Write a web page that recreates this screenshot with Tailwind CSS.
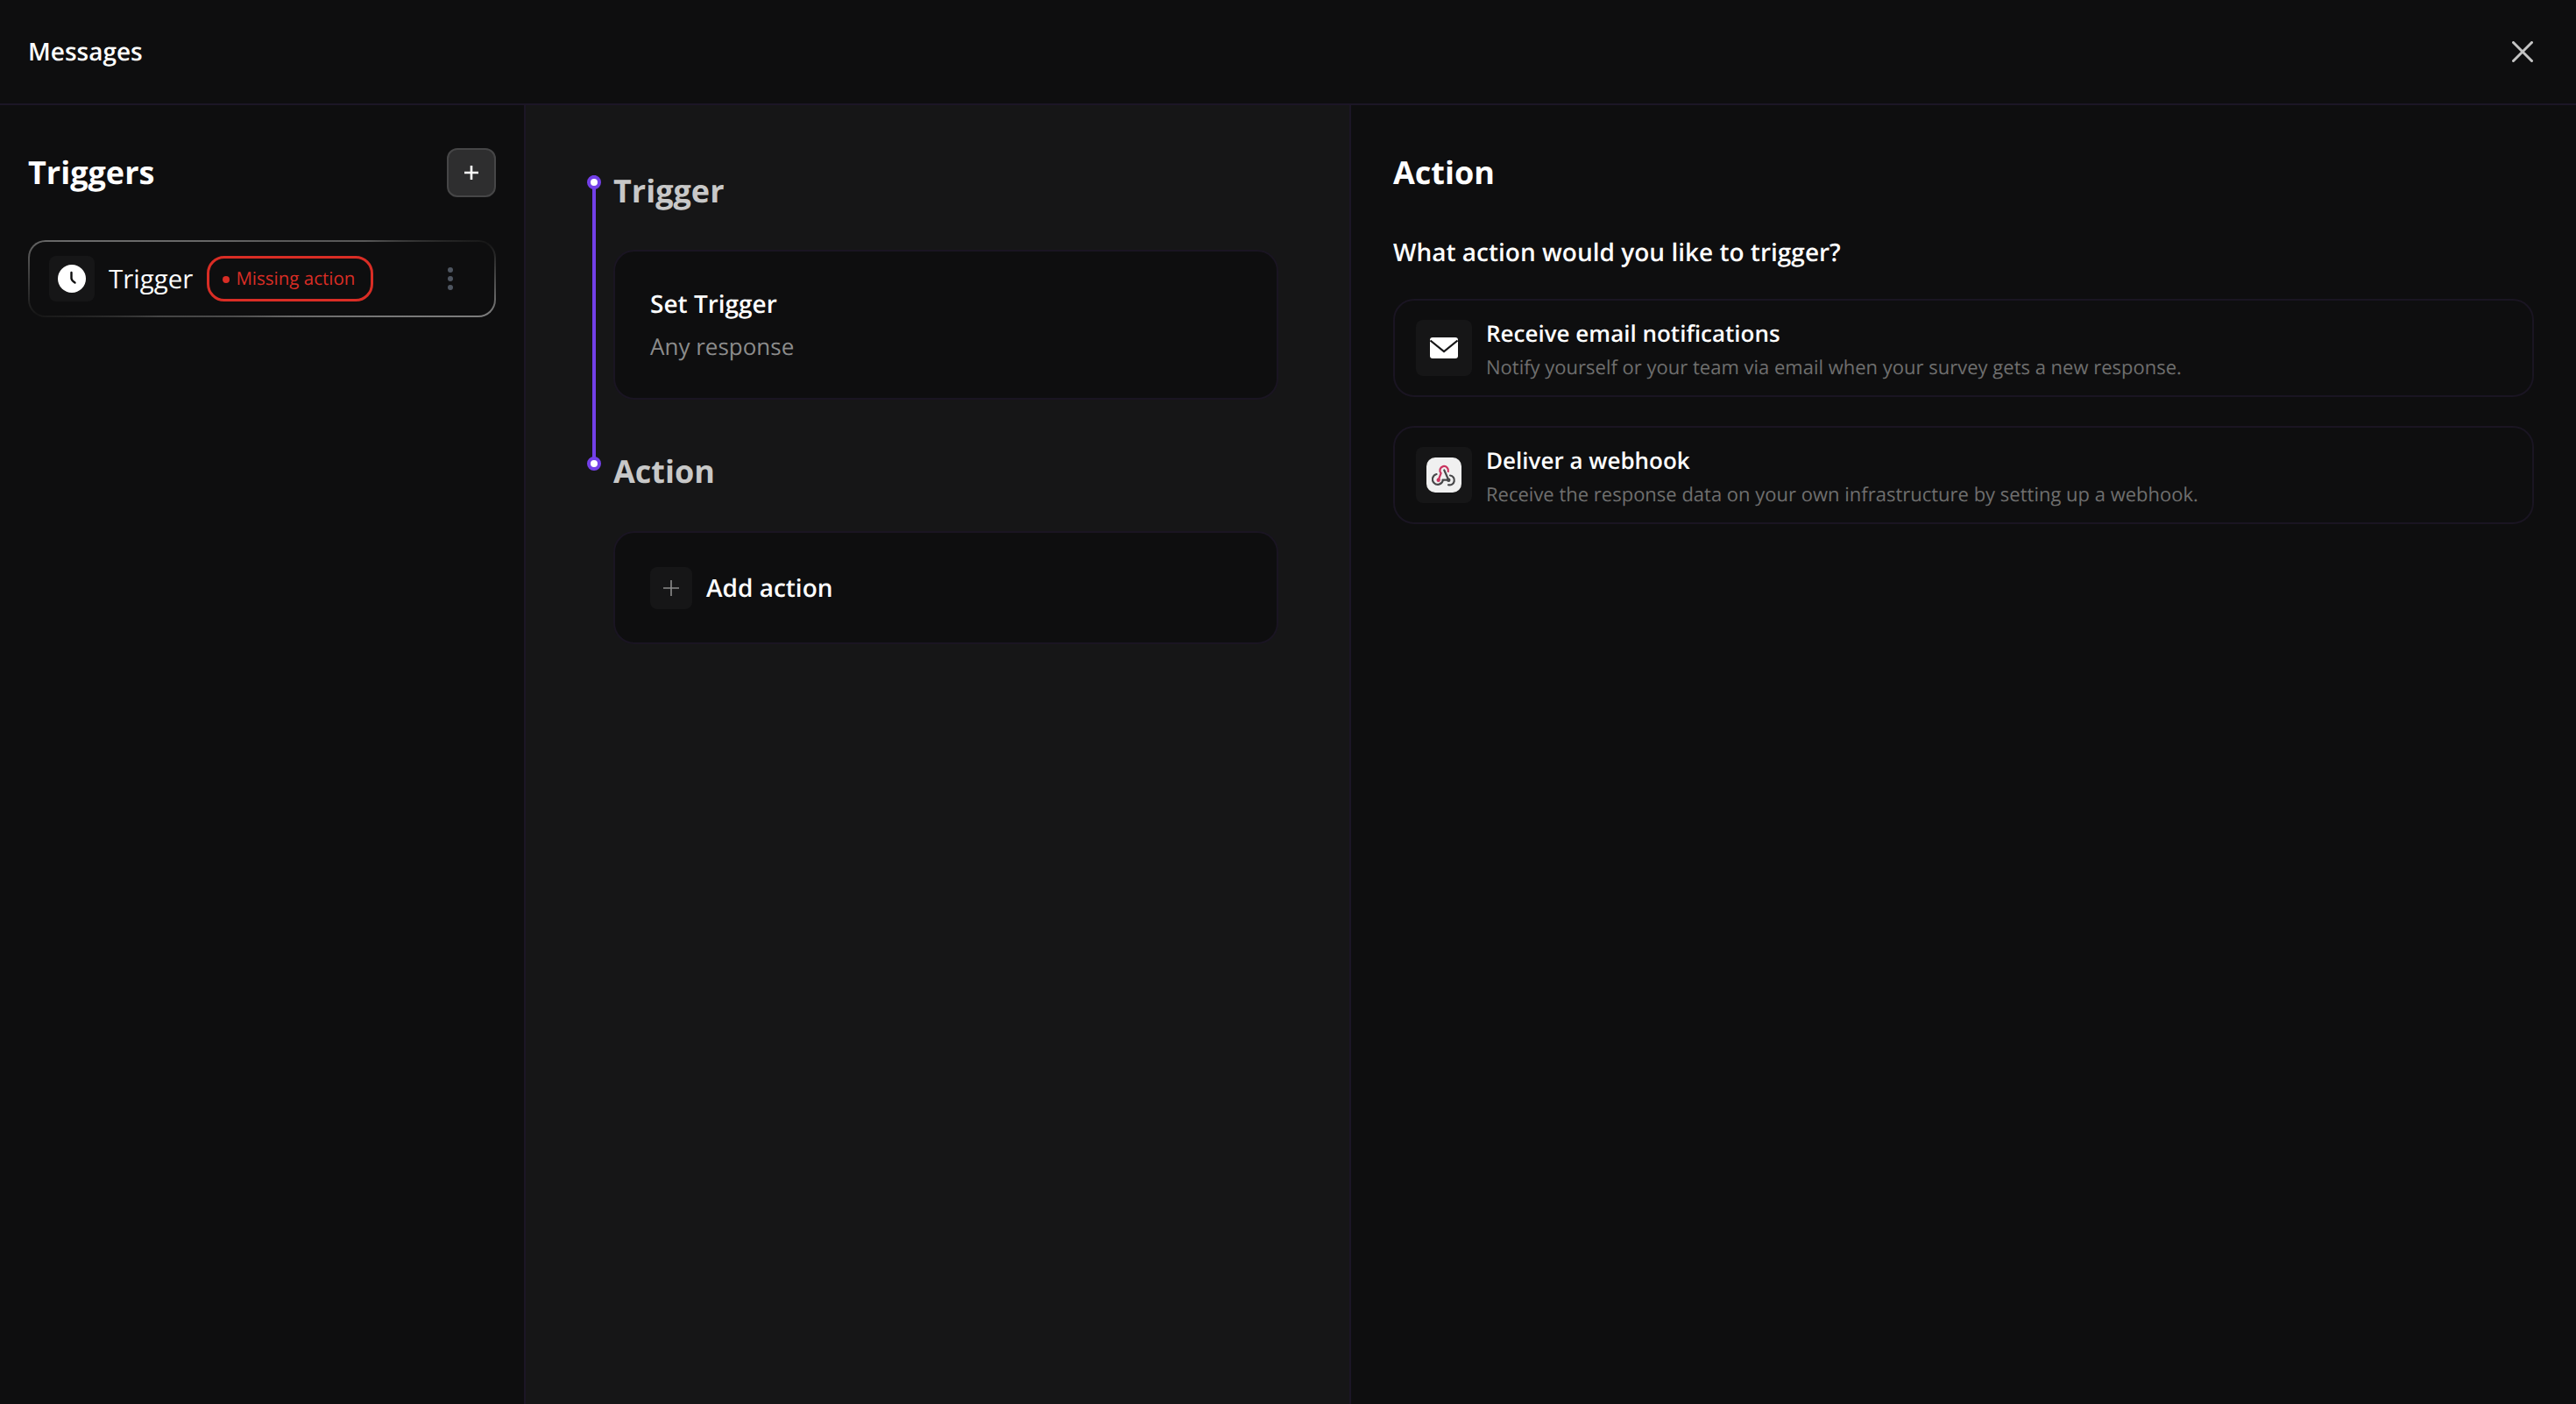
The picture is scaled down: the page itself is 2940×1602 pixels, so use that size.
<!DOCTYPE html>
<html lang="en">
<head>
    <meta charset="UTF-8">
    <title>Messages</title>
    <script src="https://cdn.jsdelivr.net/npm/@tailwindcss/browser@4"></script>
</head>
<body class="bg-[#0e0e0f] text-white font-['Open_Sans',sans-serif] [text-rendering:geometricPrecision]">
<div class="h-[1602px] w-[2940px] flex flex-col overflow-hidden">

    <!-- Header -->
    <header class="h-[120px] shrink-0 flex items-center justify-between pl-8 pr-[49px] border-b-2 border-[#1c1626]">
        <h1 class="text-[28px] leading-[40px] font-semibold">Messages</h1>
        <svg class="w-[24px] h-[24px] text-[#c4c4c4]" viewBox="0 0 24 24" fill="none" stroke="currentColor" stroke-width="3" stroke-linecap="round">
            <path d="M1.5 1.5 22.5 22.5M22.5 1.5 1.5 22.5"/>
        </svg>
    </header>

    <div class="flex-1 flex min-h-0">
        <!-- Triggers sidebar -->
        <aside class="w-[600px] shrink-0 border-r-2 border-[#1c1626] pl-8 pr-[32px] pt-[49px]">
            <div class="flex items-center justify-between h-[56px]">
                <h2 class="text-[36px] leading-[56px] font-bold">Triggers</h2>
                <button class="w-[56px] h-[56px] flex items-center justify-center rounded-[12px] bg-[#2e2e2f] border-2 border-[#464647]">
                    <svg class="w-[20px] h-[20px]" viewBox="0 0 20 20" fill="none" stroke="white" stroke-width="2.6">
                        <path d="M10 2V18M2 10H18"/>
                    </svg>
                </button>
            </div>

            <!-- gradient wrapper gives the uneven highlight on the border -->
            <div class="mt-[49px] h-[88px] rounded-[20px] p-[2px] bg-[conic-gradient(#5c5c5c_0deg,#585858_70deg,#161616_81deg,#7c7c7c_99deg,#6e6e6e_120deg,#525252_200deg,#444444_250deg,#161616_261deg,#6a6a6a_281deg,#5c5c5c_360deg)]">
                <div class="h-full rounded-[18px] bg-[#0e0e0f] flex items-center pl-[22px] pr-[47px]">
                    <div class="w-[52px] h-[52px] rounded-[8px] bg-[#161617] flex items-center justify-center shrink-0">
                        <svg class="w-[32px] h-[32px]" viewBox="0 0 32 32">
                            <circle cx="16" cy="16" r="16" fill="white"/>
                            <path d="M15.5 9V15.5Q15.5 18 19.5 20.5" fill="none" stroke="#0e0e0f" stroke-width="2.4" stroke-linecap="round"/>
                        </svg>
                    </div>
                    <span class="ml-[16px] text-[29.5px] leading-[40px]">Trigger</span>
                    <span class="ml-[16px] h-[52px] w-[190px] rounded-[20px] border-[3px] border-[#d92d25] flex items-center pl-[15px] pt-px text-[#d92d25] text-[20.5px] font-medium">
                        <span class="w-[8px] h-[8px] rounded-full bg-[#d92d25] mr-[7px] shrink-0"></span>Missing action
                    </span>
                    <span class="ml-auto flex flex-col gap-[4px]">
                        <span class="w-[6px] h-[6px] rounded-full bg-[#4e5560]"></span>
                        <span class="w-[6px] h-[6px] rounded-full bg-[#4e5560]"></span>
                        <span class="w-[6px] h-[6px] rounded-full bg-[#4e5560]"></span>
                    </span>
                </div>
            </div>
        </aside>

        <!-- Flow -->
        <main class="w-[942px] shrink-0 bg-[#161617] border-r-2 border-[#1c1626] pl-[100px] pr-[81px] pt-[70px] relative">
            <div class="absolute left-[76px] top-[80px] w-[4px] h-[330px] bg-[#7340e8]"></div>
            <div class="absolute left-[70px] top-[80px] w-[16px] h-[16px] rounded-full bg-white border-4 border-[#7340e8]"></div>
            <div class="absolute left-[70px] top-[401px] w-[16px] h-[16px] rounded-full bg-white border-4 border-[#7340e8]"></div>

            <h3 class="text-[36px] leading-[56px] font-bold text-[#c8c8c8]">Trigger</h3>
            <div class="mt-[39px] h-[171px] rounded-[24px] border-2 border-[#1a1522] bg-[#0e0e0f] pl-[40px] flex flex-col justify-center">
                <p class="text-[28px] leading-[40px] font-semibold">Set Trigger</p>
                <p class="mt-[8px] text-[26px] leading-[40px] text-[#8c8c8c]">Any response</p>
            </div>

            <h3 class="mt-[54px] text-[36px] leading-[56px] font-bold text-[#c8c8c8]">Action</h3>
            <div class="mt-[40px] h-[129px] rounded-[24px] border-2 border-[#1a1522] bg-[#0e0e0f] pl-[40px] flex items-center">
                <div class="w-[48px] h-[48px] rounded-[8px] bg-[#161617] flex items-center justify-center">
                    <svg class="w-[20px] h-[20px]" viewBox="0 0 20 20" fill="none" stroke="#8c8c8c" stroke-width="1.6">
                        <path d="M10 1V19M1 10H19"/>
                    </svg>
                </div>
                <span class="ml-[16px] text-[28px] leading-[40px] font-semibold">Add action</span>
            </div>
        </main>

        <!-- Action picker -->
        <section class="flex-1 pl-[48px] pr-[48px] pt-[49px]">
            <h2 class="text-[36px] leading-[56px] font-bold">Action</h2>
            <p class="mt-[43px] text-[28px] leading-[40px] font-semibold">What action would you like to trigger?</p>

            <div class="mt-[33px] flex flex-col gap-[33px]">
                <div class="h-[112px] rounded-[24px] border-2 border-[#1a1522] flex items-center pl-[24px]">
                    <div class="w-[64px] h-[64px] rounded-[8px] bg-[#161617] flex items-center justify-center shrink-0">
                        <svg class="w-[32px] h-[24px]" viewBox="0 0 32 24">
                            <rect width="32" height="24" rx="3" fill="white"/>
                            <path d="M0.5 3.5 16 16 31.5 3.5" fill="none" stroke="#161617" stroke-width="2.2"/>
                        </svg>
                    </div>
                    <div class="ml-[16px] pt-[3px]">
                        <p class="text-[26px] leading-[36px] font-semibold">Receive email notifications</p>
                        <p class="mt-[5px] text-[22px] leading-[32px] text-[#6e6e6e]">Notify yourself or your team via email when your survey gets a new response.</p>
                    </div>
                </div>

                <div class="h-[112px] rounded-[24px] border-2 border-[#1a1522] flex items-center pl-[24px]">
                    <div class="w-[64px] h-[64px] rounded-[8px] bg-[#161617] flex items-center justify-center shrink-0">
                        <div class="w-[40px] h-[40px] rounded-[10px] bg-[#f0f0f0] flex items-center justify-center">
                            <svg class="w-[28px] h-[28px]" viewBox="0 0 28 28" fill="none" stroke-width="2.2" stroke-linecap="round">
                                <path d="M7.7 19.7 10.6 12A4.8 4.8 0 1 1 18.8 10" stroke="#c9345f"/>
                                <path d="M14.3 8.5 19.3 19.7H12.5" stroke="#48484a"/>
                                <path d="M5.5 13A6 6 0 1 0 12.7 20.5" stroke="#48484a"/>
                                <path d="M21 14.5A5.5 5.5 0 1 1 19 25.3" stroke="#48484a"/>
                                <circle cx="7.7" cy="19.7" r="2.2" fill="#c9345f"/>
                                <circle cx="19.3" cy="19.7" r="2.2" fill="#48484a"/>
                            </svg>
                        </div>
                    </div>
                    <div class="ml-[16px] pt-[3px]">
                        <p class="text-[26px] leading-[36px] font-semibold">Deliver a webhook</p>
                        <p class="mt-[5px] text-[22px] leading-[32px] text-[#6e6e6e]">Receive the response data on your own infrastructure by setting up a webhook.</p>
                    </div>
                </div>
            </div>
        </section>
    </div>
</div>
</body>
</html>
